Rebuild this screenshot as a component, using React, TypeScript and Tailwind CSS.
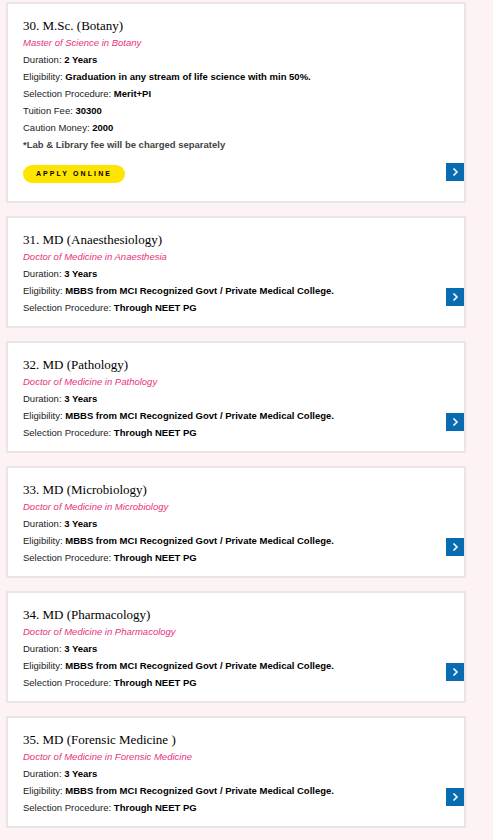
import React from "react";

interface Course {
  title: string;
  subtitle: string;
  rows: [string, string][];
  note?: string;
  apply?: boolean;
}

const MD_ROWS: [string, string][] = [
  ["Duration:", "3 Years"],
  ["Eligibility:", "MBBS from MCI Recognized Govt / Private Medical College."],
  ["Selection Procedure:", "Through NEET PG"],
];

const COURSES: Course[] = [
  {
    title: "30. M.Sc. (Botany)",
    subtitle: "Master of Science in Botany",
    rows: [
      ["Duration:", "2 Years"],
      ["Eligibility:", "Graduation in any stream of life science with min 50%."],
      ["Selection Procedure:", "Merit+PI"],
      ["Tuition Fee:", "30300"],
      ["Caution Money:", "2000"],
    ],
    note: "*Lab & Library fee will be charged separately",
    apply: true,
  },
  { title: "31. MD (Anaesthesiology)", subtitle: "Doctor of Medicine in Anaesthesia", rows: MD_ROWS },
  { title: "32. MD (Pathology)", subtitle: "Doctor of Medicine in Pathology", rows: MD_ROWS },
  { title: "33. MD (Microbiology)", subtitle: "Doctor of Medicine in Microbiology", rows: MD_ROWS },
  { title: "34. MD (Pharmacology)", subtitle: "Doctor of Medicine in Pharmacology", rows: MD_ROWS },
  { title: "35. MD (Forensic Medicine )", subtitle: "Doctor of Medicine in Forensic Medicine", rows: MD_ROWS },
];

function Chevron() {
  return (
    <svg width="10" height="10" viewBox="0 0 10 10" fill="none">
      <path d="M3.5 1.5 L7 5 L3.5 8.5" stroke="white" strokeWidth="1.6" />
    </svg>
  );
}

function CourseCard({ course }: { course: Course }) {
  return (
    <div className="flex w-[460px] border-2 border-[#ebe6e6] bg-white">
      <div className="flex-1 pl-[15px] pt-[13px] pb-[10px]">
        <h3 className="font-['Liberation_Serif',serif] text-[13px] leading-[17px] text-black">
          {course.title}
        </h3>
        <p className="text-[9.5px] italic leading-[17px] text-[#e8327e]">{course.subtitle}</p>
        {course.rows.map(([label, value]) => (
          <p key={label} className="text-[9.5px] leading-[17px] text-[#222]">
            {label} <span className="font-bold text-black">{value}</span>
          </p>
        ))}
        {course.note && (
          <p className="text-[9.5px] font-bold leading-[17px] text-[#444]">{course.note}</p>
        )}
        {course.apply && (
          <button className="mt-[12px] mb-[8px] flex h-[18px] w-[102px] items-center justify-center rounded-full bg-[#ffe400] text-[7px] font-bold tracking-[2.1px] text-black">
            APPLY ONLINE
          </button>
        )}
      </div>
      <div className="flex flex-col justify-end pb-[20px]">
        <div className="flex h-[18px] w-[18px] items-center justify-center bg-[#0a6cb0]">
          <Chevron />
        </div>
      </div>
    </div>
  );
}

export default function App() {
  return (
    <div className="min-h-[840px] bg-[#fdf3f4] pl-[6px] pt-[2px] font-['Liberation_Sans',Arial,sans-serif]">
      <div className="flex flex-col gap-[13px]">
        {COURSES.map((c) => (
          <CourseCard key={c.title} course={c} />
        ))}
      </div>
    </div>
  );
}
